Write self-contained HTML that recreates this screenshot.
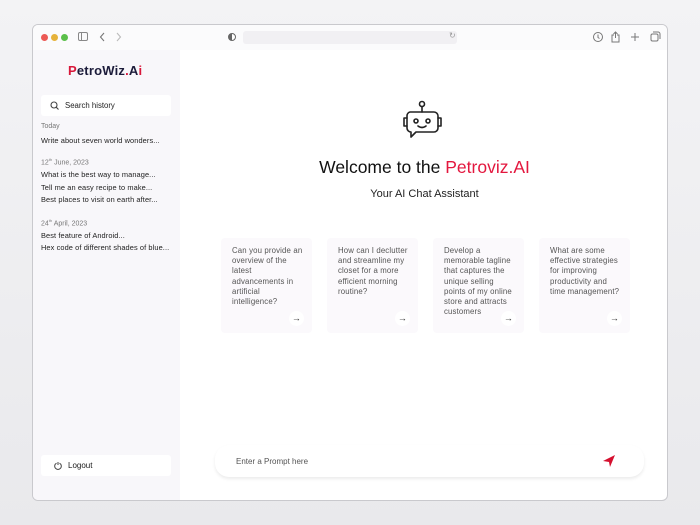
<!DOCTYPE html>
<html><head><meta charset="utf-8"><style>
*{margin:0;padding:0;box-sizing:border-box}
body{width:700px;height:525px;background:linear-gradient(#f3f3f5,#e9e9ec);font-family:"Liberation Sans",sans-serif;position:relative;overflow:hidden;color:#1a1a1a}
.win{position:absolute;left:32px;top:24px;width:636px;height:477px;background:#fff;border:1px solid #c9c9cd;border-radius:6px;overflow:hidden}
.bar{height:25px;background:#fbfbfc;position:relative}
.dot{position:absolute;top:9px;width:7px;height:7px;border-radius:50%}
.side{position:absolute;left:0;top:25px;width:147px;bottom:0;background:#f8f7fa}
.abs{position:absolute}
.logo{left:35px;font-size:13px;font-weight:bold;color:#1c1c3a;letter-spacing:.2px}
.search{left:8px;width:130px;height:21px;background:#fff;border-radius:3px;font-size:7.8px;color:#222;padding:6px 0 0 24px}
.h{font-size:7px;color:#777;left:8px}
.it{font-size:7.4px;color:#222;left:8px;white-space:nowrap;letter-spacing:.1px}
.card{position:absolute;top:213px;width:91px;height:95px;background:#fbf9fc;border-radius:4px;padding:8px 9px 0 11px;font-size:7.8px;line-height:10.2px;color:#555;letter-spacing:.15px}
.arr{position:absolute;right:8px;bottom:7px;width:15px;height:15px;border-radius:50%;background:#fff;font-size:9px;text-align:center;line-height:14px;color:#333}
</style></head><body>
<div class="win">
 <div class="bar">
  <div class="dot" style="left:8px;background:#ec5a55"></div>
  <div class="dot" style="left:18px;background:#e6b33b"></div>
  <div class="dot" style="left:28px;background:#5bc04a"></div>
  <div class="abs" style="left:45px;top:7px;width:10px;height:9px;border:1px solid #888;border-radius:2px"></div>
  <div class="abs" style="left:48px;top:7px;width:1px;height:9px;background:#888"></div>
  <svg class="abs" style="left:66px;top:7px" width="30" height="10" fill="none" stroke-width="1.1"><path d="M5 1L1.5 5 5 9" stroke="#777"/><path d="M18 1l3.5 4L18 9" stroke="#bbb"/></svg>
  <div class="abs" style="left:195px;top:8px;width:8px;height:8px;border:1px solid #666;border-radius:50%;background:linear-gradient(90deg,#666 50%,#fff 50%)"></div>
  <div class="abs" style="left:210px;top:6px;width:214px;height:13px;background:#f1f0f3;border-radius:3px"></div>
  <div class="abs" style="left:416px;top:6px;font-size:8px;color:#999">↻</div>
  <svg class="abs" style="left:559px;top:5px;" width="80" height="14" fill="none" stroke="#777" stroke-width="1"><circle cx="6" cy="7" r="4.5"/><path d="M6 4.5v3l1.5 1"/><path d="M22 5h-2v7h7V5h-2M23.5 2v6M21.5 4l2-2 2 2"/><path d="M43 3v8M39 7h8"/><rect x="59" y="4" width="7" height="7" rx="1.5"/><path d="M61 2h5a2 2 0 0 1 2 2v5"/></svg>
 </div>
 <div class="side">
  <div class="abs logo" style="top:13px"><span style="color:#d8183a">P</span>etroWiz<span style="color:#d8183a">.</span>A<span style="color:#d8183a">i</span></div>
  <div class="abs search" style="top:45px"><svg class="abs" style="left:9px;top:6px" width="9" height="9" fill="none" stroke="#444" stroke-width="1.1"><circle cx="4" cy="4" r="3"/><path d="M6.2 6.2L8.5 8.5"/></svg>Search history</div>
  <div class="abs h" style="top:73px">Today</div>
  <div class="abs it" style="top:86px">Write about seven world wonders...</div>
  <div class="abs h" style="top:107px">12<sup style="font-size:4px">th</sup> June, 2023</div>
  <div class="abs it" style="top:120px">What is the best way to manage...</div>
  <div class="abs it" style="top:133px">Tell me an easy recipe to make...</div>
  <div class="abs it" style="top:145px">Best places to visit on earth after...</div>
  <div class="abs h" style="top:168px">24<sup style="font-size:4px">th</sup> April, 2023</div>
  <div class="abs it" style="top:181px">Best feature of Android...</div>
  <div class="abs it" style="top:193px">Hex code of different shades of blue...</div>
  <div class="abs" style="left:8px;top:405px;width:130px;height:21px;background:#fff;border-radius:3px;font-size:8px;padding:6px 0 0 27px"><svg class="abs" style="left:13px;top:6px" width="8" height="9" fill="none" stroke="#444" stroke-width="1"><path d="M2.5 2.2A3.3 3.3 0 1 0 5.5 2.2"/><path d="M4 1v3"/></svg>Logout</div>
 </div>
 <svg class="abs" style="left:366px;top:75px" width="46" height="46" viewBox="0 0 46 46" fill="none" stroke="#222" stroke-width="1.6" stroke-linecap="round" stroke-linejoin="round">
  <circle cx="23" cy="4" r="2.5"/><path d="M23 6.5V12"/>
  <path d="M11 12h24a4 4 0 0 1 4 4v12a4 4 0 0 1-4 4H17l-5 5v-5a4 4 0 0 1-4-4V16a4 4 0 0 1 3-4z"/>
  <path d="M8 18H5v8h3M39 18h3v8h-3"/>
  <circle cx="17" cy="21" r="2"/><circle cx="29" cy="21" r="2"/><path d="M19 26q4 3 8 0"/>
 </svg>
 <div class="abs" style="left:147px;width:489px;top:132px;text-align:center;font-size:17.5px;color:#111">Welcome to the <span style="color:#e3173e">Petroviz.AI</span></div>
 <div class="abs" style="left:147px;width:489px;top:163px;text-align:center;font-size:11px;color:#222">Your AI Chat Assistant</div>
 <div class="card" style="left:188px">Can you provide an overview of the latest advancements in artificial intelligence?<div class="arr">→</div></div>
 <div class="card" style="left:294px">How can I declutter and streamline my closet for a more efficient morning routine?<div class="arr">→</div></div>
 <div class="card" style="left:400px">Develop a memorable tagline that captures the unique selling points of my online store and attracts customers<div class="arr">→</div></div>
 <div class="card" style="left:506px">What are some effective strategies for improving productivity and time management?<div class="arr">→</div></div>
 <div class="abs" style="left:182px;top:420px;width:429px;height:32px;background:#fff;border-radius:14px;box-shadow:0 2px 3px rgba(0,0,0,.08);font-size:8px;color:#555;padding:12px 0 0 21px">Enter a Prompt here
  <svg class="abs" style="right:28px;top:9px" width="14" height="14" viewBox="0 0 14 14"><path d="M1 7L13 1 8 13 7 8z" fill="#d5102f"/></svg>
 </div>
</div>
</body></html>
